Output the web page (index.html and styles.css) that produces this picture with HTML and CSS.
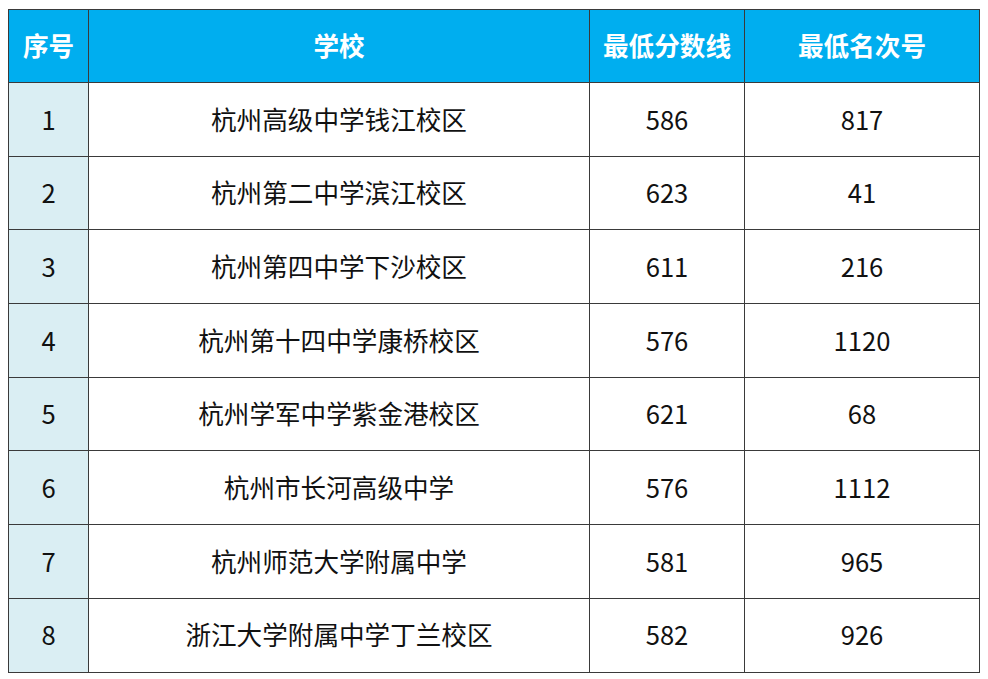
FILE: index.html
```html
<!DOCTYPE html>
<html lang="zh-CN">
<head>
<meta charset="utf-8">
<link rel="stylesheet" href="styles.css">
</head>
<body>
<table class="rank">
  <colgroup>
    <col class="c-no">
    <col class="c-school">
    <col class="c-score">
    <col class="c-rank">
  </colgroup>
  <thead>
    <tr><th>序号</th><th>学校</th><th>最低分数线</th><th>最低名次号</th></tr>
  </thead>
  <tbody>
    <tr><td class="no">1</td><td>杭州高级中学钱江校区</td><td>586</td><td>817</td></tr>
    <tr><td class="no">2</td><td>杭州第二中学滨江校区</td><td>623</td><td>41</td></tr>
    <tr><td class="no">3</td><td>杭州第四中学下沙校区</td><td>611</td><td>216</td></tr>
    <tr><td class="no">4</td><td>杭州第十四中学康桥校区</td><td>576</td><td>1120</td></tr>
    <tr><td class="no">5</td><td>杭州学军中学紫金港校区</td><td>621</td><td>68</td></tr>
    <tr><td class="no">6</td><td>杭州市长河高级中学</td><td>576</td><td>1112</td></tr>
    <tr><td class="no">7</td><td>杭州师范大学附属中学</td><td>581</td><td>965</td></tr>
    <tr><td class="no">8</td><td>浙江大学附属中学丁兰校区</td><td>582</td><td>926</td></tr>
  </tbody>
</table>
</body>
</html>
```

FILE: styles.css
```css
html, body {
  margin: 0;
  padding: 0;
  background: #ffffff;
}
body {
  padding: 9px 0 0 8px;
  font-family: "Noto Sans CJK SC", "Noto Sans", sans-serif;
}
.rank {
  border-collapse: collapse;
  table-layout: fixed;
  width: 971px;
}
.c-no { width: 80px; }
.c-school { width: 501px; }
.c-score { width: 155px; }
.c-rank { width: 235px; }
.rank th, .rank td {
  border: 1px solid #3a3a3a;
  text-align: center;
  vertical-align: middle;
  padding: 0 0 2px 0;
  font-size: 25.6px;
  line-height: 1;
}
.rank th {
  background: #00aeef;
  color: #ffffff;
  font-weight: 700;
  height: 70px;
}
.rank td {
  color: #111111;
  font-weight: 400;
  height: 70.7px;
}
.rank td.no {
  background: #daeef3;
}
```
